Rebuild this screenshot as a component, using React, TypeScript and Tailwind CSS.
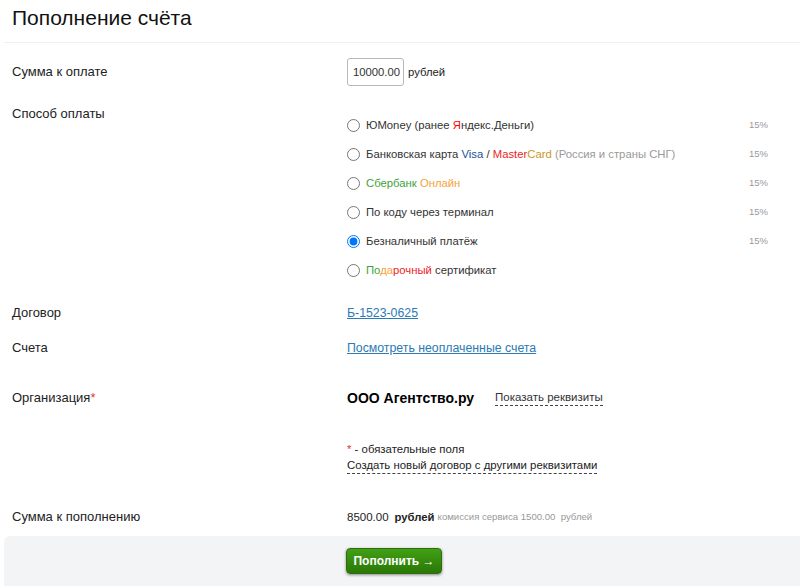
import { useState } from 'react';

// payment methods list
const methods = [
    {
        id: 'yoomoney',
        label: (
            <>
                ЮMoney (ранее <span className="text-[#ff0000]">Я</span>ндекс.Деньги)
            </>
        ),
        fee: '15%',
    },
    {
        id: 'card',
        label: (
            <>
                Банковская карта <span className="text-[#1a4f9c]">Visa</span> /{' '}
                <span className="text-[#ee1c25]">Master</span>
                <span className="text-[#c9962a]">Card</span>{' '}
                <span className="text-[#9a9a9a]">(Россия и страны СНГ)</span>
            </>
        ),
        fee: '15%',
    },
    {
        id: 'sber',
        label: (
            <>
                <span className="text-[#3ea33a]">Сбербанк</span>{' '}
                <span className="text-[#f7a23a]">Онлайн</span>
            </>
        ),
        fee: '15%',
    },
    { id: 'terminal', label: <>По коду через терминал</>, fee: '15%' },
    { id: 'cashless', label: <>Безналичный платёж</>, fee: '15%' },
    {
        id: 'gift',
        label: (
            <>
                <span className="text-[#3ea33a]">По</span>
                <span className="text-[#f7a23a]">да</span>
                <span className="text-[#ee1c25]">рочный</span> сертификат
            </>
        ),
        fee: '',
    },
];

function App() {
    const [method, setMethod] = useState('cashless');

    return (
        <div
            className="w-[800px] h-[586px] overflow-hidden bg-white text-[#222] pl-1"
            style={{ fontFamily: '"Liberation Sans", Arial, sans-serif' }}
        >
            {/* title */}
            <div className="h-[43px] border-b border-[#efefef] pl-2">
                <h1 className="text-[21px] leading-[36px] text-[#111]">
                    Пополнение счёта
                </h1>
            </div>

            <div className="pl-2">
                {/* amount */}
                <div className="flex items-center h-[28px] mt-[15px]">
                    <div className="w-[335px] text-[13px]">Сумма к оплате</div>
                    <div className="flex items-center">
                        <div className="w-[57px] h-[28px] border border-[#b8b8b8] rounded-[3px] flex items-center justify-end pr-[3px] text-[11.3px] text-[#333]">
                            10000.00
                        </div>
                        <span className="ml-[4px] text-[11.3px] font-medium">
                            рублей
                        </span>
                    </div>
                </div>

                {/* payment method */}
                <div className="flex mt-[20px]">
                    <div className="w-[335px] text-[13px] leading-4">
                        Способ оплаты
                    </div>
                    <div className="flex-1 pt-[5px]">
                        {methods.map((m) => (
                            <label
                                key={m.id}
                                className="flex items-center h-[29px] text-[11.3px] text-[#333] cursor-pointer"
                            >
                                <input
                                    type="radio"
                                    name="method"
                                    className="m-0 w-[13px] h-[13px]"
                                    checked={method === m.id}
                                    onChange={() => setMethod(m.id)}
                                />
                                <span className="ml-[6px] flex-1">{m.label}</span>
                                <span className="w-[51px] text-[9.5px] text-[#999]">
                                    {m.fee}
                                </span>
                            </label>
                        ))}
                    </div>
                </div>

                {/* contract */}
                <div className="flex mt-[20px] leading-4">
                    <div className="w-[335px] text-[13px]">Договор</div>
                    <a href="#" className="text-[12.3px] text-[#2a7ab5] underline">
                        Б-1523-0625
                    </a>
                </div>

                {/* invoices */}
                <div className="flex mt-[19px] leading-4">
                    <div className="w-[335px] text-[13px]">Счета</div>
                    <a href="#" className="text-[12.3px] text-[#2a7ab5] underline">
                        Посмотреть неоплаченные счета
                    </a>
                </div>

                {/* organization */}
                <div className="flex items-center mt-[34px] leading-4">
                    <div className="w-[335px] text-[13px]">
                        Организация<span className="text-[#e53935]">*</span>
                    </div>
                    <span className="text-[14px] font-bold text-black">
                        ООО Агентство.ру
                    </span>
                    <span className="ml-[21px] text-[11.5px] text-[#333] border-b border-dashed border-[#444] leading-[15px]">
                        Показать реквизиты
                    </span>
                </div>

                {/* note */}
                <div className="ml-[335px] mt-[35px] text-[11.4px] leading-4 text-[#222]">
                    <div>
                        <span className="text-[#e53935]">*</span> - обязательные поля
                    </div>
                    <span className="border-b border-dashed border-[#444] leading-[15px] inline-block">
                        Создать новый договор с другими реквизитами
                    </span>
                </div>

                {/* total */}
                <div className="flex items-center mt-[35px] leading-4">
                    <div className="w-[335px] text-[13px]">Сумма к пополнению</div>
                    <span className="text-[11.5px] font-medium">8500.00</span>
                    <span className="ml-[6px] text-[11.3px] font-bold">рублей</span>
                    <span className="ml-[3px] text-[9.6px] text-[#999]">
                        комиссия сервиса 1500.00&nbsp; рублей
                    </span>
                </div>
            </div>

            {/* footer */}
            <div className="mt-[11px] h-[50px] bg-[#f3f4f5] rounded-tl-[6px] flex items-center pl-[342px]">
                <button className="h-[26px] w-[96px] rounded-[4px] bg-gradient-to-b from-[#41a015] to-[#2a7806] text-white text-[12px] font-bold shadow-[0_1px_3px_rgba(0,0,0,0.45)] border border-[#2b6e0b]">
                    Пополнить →
                </button>
            </div>
        </div>
    );
}

export default App;
